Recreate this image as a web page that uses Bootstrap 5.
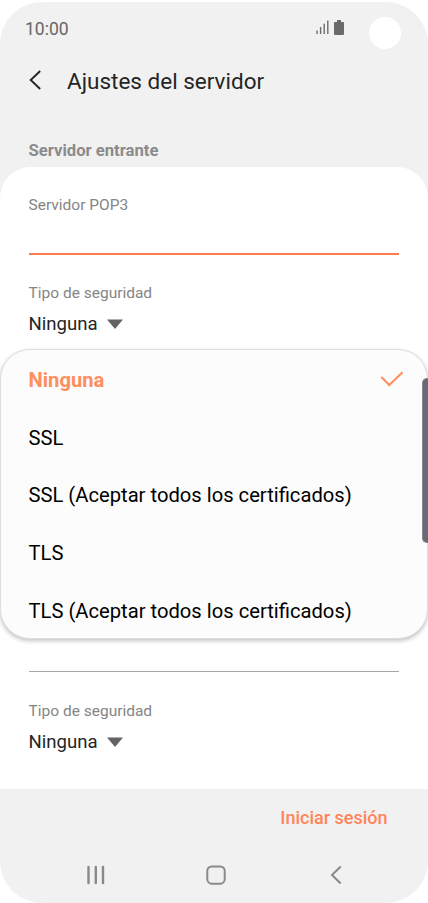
<!DOCTYPE html>
<html lang="es">
<head>
<meta charset="utf-8">
<meta name="viewport" content="width=device-width, initial-scale=1">
<title>Ajustes del servidor</title>
<link href="https://cdn.jsdelivr.net/npm/bootstrap@5.3.0/dist/css/bootstrap.min.css" rel="stylesheet">
<style>
  body { font-family: Roboto, "Liberation Sans", sans-serif; background: #fff; line-height: 1; color: #252525; }
  svg { display: block; flex: none; }
  .phone { width: 428px; height: 901px; margin-top: 2px; background: #f1f1f1; border-radius: 42px; }
  .status { height: 55px; padding: 0 27.5px 0 25px; font-size: 17.5px; color: #666; }
  .status-icons { margin-right: 24.5px; gap: 5.5px; margin-top: -5px; }
  .camera { width: 32px; height: 32px; margin-top: 7px; }
  .titlebar { height: 46px; padding-left: 29px; gap: 25px; }
  .titlebar h1 { font-size: 22.5px; font-weight: 400; line-height: 46px; padding-top: 1px; }
  .section-title { height: 64px; padding: 38px 28.5px 0; font-size: 16.65px; line-height: 20px; font-weight: 700; color: #8b8b8b; }
  .sheet { height: 622px; padding: 28px 29px 0 28.5px; border-radius: 31px 31px 0 0; }
  .field-label { font-size: 15.5px; line-height: 20px; color: #858585; }
  .line-active { height: 2px; margin-top: 38px; background: #ff7a4a; }
  .line-idle { height: 1px; margin-top: 335px; margin-bottom: 1px; background: #a6a6a6; }
  .choice { font-size: 18.6px; line-height: 24px; gap: 9px; margin-top: 9px; }
  .security { padding-top: 28px; }
  .options { top: 182px; height: 290px; padding-top: 1px; background: #fcfcfc; border: 1px solid #dedede; border-radius: 30px; box-shadow: 0 2px 4px rgba(0,0,0,.24); color: #000; font-size: 20.2px; }
  .option { height: 57.8px; padding: 0 23px 0 27.5px; }
  .chosen { color: #ff8e5e; font-weight: 700; }
  .chosen svg { margin-top: -2px; }
  .scroll-thumb { top: 28px; right: -1px; width: 6px; height: 165px; background: #6b6878; border: 1px solid #8a8793; border-right: 0; border-radius: 5px 0 0 5px; }
  .action { height: 58px; padding-right: 40.5px; font-size: 18px; font-weight: 500; color: #ff845a; }
  .navkeys { height: 56px; padding: 0 86px 1px; }
  .navkeys svg:nth-child(2) { margin-right: 5px; }
</style>
</head>
<body>
<div class="phone overflow-hidden d-flex flex-column">
  <header>
    <div class="status d-flex align-items-center">
      <span>10:00</span>
      <div class="status-icons d-flex align-items-center ms-auto">
        <svg width="13" height="14" viewBox="0 0 13 14" stroke="#6d6d6d" stroke-width="1.4"><path d="M1 10.5V14M4.600 7V14M8.200 3.800V14M11.800 .500V14"/></svg>
        <svg width="10" height="15" viewBox="0 0 10 15" fill="#6a6a6a"><path d="M3 0h4v2h2a1 1 0 0 1 1 1v11a1 1 0 0 1-1 1H1a1 1 0 0 1-1-1V3a1 1 0 0 1 1-1h2z"/></svg>
      </div>
      <div class="camera bg-white rounded-circle"></div>
    </div>
    <div class="titlebar d-flex align-items-center">
      <svg width="13" height="20" viewBox="0 0 13 20" fill="none" stroke="#252525" stroke-width="1.9"><path d="M11.200 1L1.700 10l9.500 9"/></svg>
      <h1 class="m-0">Ajustes del servidor</h1>
    </div>
  </header>
  <h2 class="section-title m-0">Servidor entrante</h2>
  <main class="sheet bg-white position-relative">
    <div class="field-label">Servidor POP3</div>
    <div class="line-active"></div>
    <div class="security">
      <div class="field-label">Tipo de seguridad</div>
      <div class="choice d-flex align-items-center">Ninguna
        <svg width="16" height="10" viewBox="0 0 16 10" fill="#636363"><path d="M0 .500h16L8 10z"/></svg>
      </div>
    </div>
    <div class="line-idle"></div>
    <div class="security">
      <div class="field-label">Tipo de seguridad</div>
      <div class="choice d-flex align-items-center">Ninguna
        <svg width="16" height="10" viewBox="0 0 16 10" fill="#636363"><path d="M0 .500h16L8 10z"/></svg>
      </div>
    </div>
    <div class="options position-absolute start-0 w-100">
      <ul class="list-unstyled m-0">
        <li class="option chosen d-flex align-items-center justify-content-between">Ninguna
          <svg width="24" height="16" viewBox="0 0 24 16" fill="none" stroke="#ff8e5e" stroke-width="2"><path d="M1.300 6l8 8L22.500 1.300"/></svg>
        </li>
        <li class="option d-flex align-items-center">SSL</li>
        <li class="option d-flex align-items-center">SSL (Aceptar todos los certificados)</li>
        <li class="option d-flex align-items-center">TLS</li>
        <li class="option d-flex align-items-center">TLS (Aceptar todos los certificados)</li>
      </ul>
      <div class="scroll-thumb position-absolute"></div>
    </div>
  </main>
  <footer>
    <div class="action d-flex align-items-center justify-content-end">Iniciar sesión</div>
    <div class="navkeys d-flex align-items-center justify-content-between">
      <svg width="20" height="20" viewBox="0 0 20 20" stroke="#898989" stroke-width="2.400" stroke-linecap="round"><path d="M2.500 2v16M9.800 2v16M17 2v16"/></svg>
      <svg width="20" height="20" viewBox="0 0 20 20" fill="none" stroke="#898989" stroke-width="2"><rect x="1.300" y="1.500" width="17.400" height="17.200" rx="4.500"/></svg>
      <svg width="12" height="20" viewBox="0 0 12 20" fill="none" stroke="#898989" stroke-width="2"><path d="M10.700 1.500L2 10l8.700 8.500"/></svg>
    </div>
  </footer>
</div>
<script src="https://cdn.jsdelivr.net/npm/bootstrap@5.3.0/dist/js/bootstrap.bundle.min.js"></script>
</body>
</html>
